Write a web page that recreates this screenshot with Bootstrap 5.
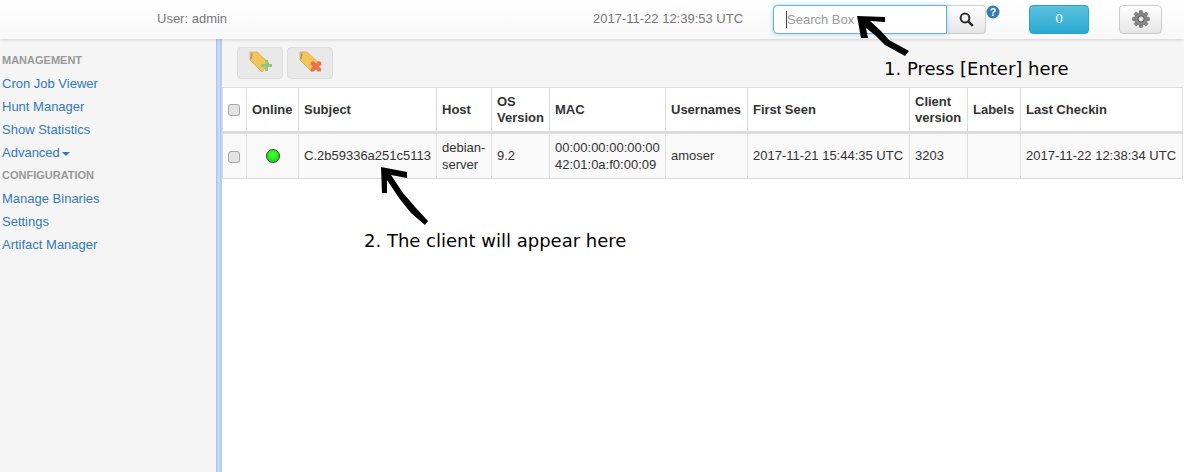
<!DOCTYPE html>
<html lang="en">
<head>
  <meta charset="UTF-8" />
  <title>GRR</title>
  <link href="https://cdn.jsdelivr.net/npm/bootstrap@5.3.3/dist/css/bootstrap.min.css" rel="stylesheet" />
  <style>
    html, body { height: 472px; overflow: hidden; }
    body { font-family: "Liberation Sans", Arial, sans-serif; font-size: 13px; line-height: 1.42; color: #333; background: #fff; }
    .top-bar { height: 39px; background: linear-gradient(#fff, #f8f8f8); box-shadow: 0 1px 3px rgba(0,0,0,.15); position: relative; z-index: 2; color: #777; }
    .user-box { width: 157px; }
    .user-text { width: 436px; }
    .time-text { width: 180px; }
    .search-wrap { width: 174px; height: 29px; margin-top: -1px; }
    .search-input { width: 100%; height: 100%; font-size: 13px; padding: 0 13px; border: 1px solid #66afe9; border-radius: 4px 0 0 4px; box-shadow: 0 0 4px rgba(102,175,233,.5); outline: 0; font-family: inherit; }
    .search-input::placeholder { color: #999; }
    .search-caret { position: absolute; left: 13px; top: 6px; width: 1px; height: 17px; background: #444; }
    .search-btn { width: 39px; height: 29px; padding: 0; margin-top: -1px; border: 1px solid #ccc; border-left: 0; border-radius: 0 4px 4px 0; background: linear-gradient(#fff, #e6e6e6); }
    .help-wrap { width: 43px; height: 29px; }
    .count-btn { width: 60px; height: 29px; padding: 0; font-size: 13px; margin-top: -1px; color: #fff; border: 1px solid #28a4c9; border-radius: 4px; background: linear-gradient(#5bc0de, #2aabd2); }
    .gear-btn { width: 43px; height: 29px; padding: 0; margin-left: 30px; margin-top: -1px; border: 1px solid #ccc; border-radius: 4px; background: linear-gradient(#fff, #e6e6e6); }
    .main-area { height: 433px; }
    .side-nav { width: 216px; background: #f5f5f5; padding: 13px 2px 0; }
    .side-head { font-size: 11px; font-weight: 700; color: #999; line-height: 16px; height: 20px; }
    .side-head-next { line-height: 23px; height: 23px; }
    .side-link { display: block; height: 23px; line-height: 23px; color: #337ab7; text-decoration: none; }
    .side-caret { display: inline-block; margin-left: 2px; vertical-align: middle; border-top: 4px solid #337ab7; border-left: 4px solid transparent; border-right: 4px solid transparent; }
    .split-bar { width: 6px; background: linear-gradient(to right, #a4c2f4, #d3e2fb 50%, #a4c2f4 85%, #e2e2e2); }
    .content-pane { width: 962px; }
    .tool-row { height: 48px; background: #f5f5f5; padding: 8px 15px 0; gap: 4px; }
    .tool-btn { width: 46px; height: 32px; padding: 0; border: 1px solid #ddd; border-radius: 4px; background: #e9e9e9; }
    .client-table { width: 960px; table-layout: fixed; margin: 0; border-color: #ddd; font-size: 13px; --bs-table-color: #333; --bs-table-border-color: #ddd; }
    .client-table th, .client-table td { padding: 4px 5px 6px; line-height: 17px; vertical-align: middle; white-space: normal; }
    .client-table th { height: 45px; padding: 5px; line-height: 16px; border-bottom: 3px solid #ddd; background: #fff; }
    .client-table td { height: 44px; --bs-table-bg: #f9f9f9; background: #f9f9f9; }
    .client-table td.two-line { padding: 5px; }
    .client-table .chk-cell { padding: 0 1px 0 0; text-align: center; }
    .client-table input[type=checkbox] { appearance: none; display: inline-block; width: 12px; height: 12px; margin: 0; vertical-align: middle; border: 1px solid #a5a5a5; border-radius: 3px; background: #e3e3e3; }
    .c1 { width: 24px; } .c2 { width: 52px; } .c3 { width: 138px; } .c4 { width: 55px; } .c5 { width: 58px; }
    .c6 { width: 116px; } .c7 { width: 82px; } .c8 { width: 162px; } .c9 { width: 58px; } .c10 { width: 53px; } .c11 { width: 162px; }
    .online-dot { display: block; margin: 1px auto 0; width: 14px; height: 14px; border-radius: 50%; border: 1px solid #2a4a2a; background: radial-gradient(circle at 50% 40%, #4dff3a, #12e012 75%); }
    .note-label { position: absolute; font-family: "DejaVu Sans", sans-serif; font-size: 18px; line-height: 20px; color: #000; white-space: nowrap; z-index: 5; }
    .note-one { left: 884px; top: 59px; }
    .note-two { left: 364px; top: 231px; }
    .arrow-layer { position: absolute; left: 0; top: 0; z-index: 5; pointer-events: none; }
  </style>
</head>
<body>
  <div class="top-bar d-flex align-items-center">
    <div class="user-box"></div>
    <div class="user-text">User: admin</div>
    <div class="time-text">2017-11-22 12:39:53 UTC</div>
    <div class="search-wrap position-relative">
      <input class="search-input d-block" type="text" placeholder="Search Box" />
      <span class="search-caret"></span>
    </div>
    <button class="search-btn" type="button">
      <svg width="15" height="15" viewBox="0 0 15 15"><circle cx="6" cy="6" r="4.400" fill="none" stroke="#2a2a2a" stroke-width="2"/><path d="M9.300 9.300 13.800 13.800" stroke="#2a2a2a" stroke-width="2.600"/></svg>
    </button>
    <div class="help-wrap">
      <svg class="d-block" width="14" height="14" viewBox="0 0 14 14"><circle cx="7" cy="7" r="6.500" fill="#337ab7"/><text x="7" y="10.600" text-anchor="middle" font-family="Liberation Sans" font-size="10.500" font-weight="700" fill="#fff">?</text></svg>
    </div>
    <button class="count-btn" type="button">0</button>
    <button class="gear-btn" type="button">
      <svg width="18" height="18" viewBox="0 0 18 18"><g fill="#8c8c8c" stroke="#5a5a5a" stroke-width=".5"><rect x="7.300" y="0.500" width="3.400" height="17" rx=".8"/><rect x="7.300" y="0.500" width="3.400" height="17" rx=".8" transform="rotate(45 9 9)"/><rect x="7.300" y="0.500" width="3.400" height="17" rx=".8" transform="rotate(90 9 9)"/><rect x="7.300" y="0.500" width="3.400" height="17" rx=".8" transform="rotate(135 9 9)"/><circle cx="9" cy="9" r="6.200"/></g><circle cx="9" cy="9" r="3.200" fill="#e6e6e6" stroke="#444"/></svg>
    </button>
  </div>

  <div class="main-area d-flex">
    <nav class="side-nav">
      <div class="side-head">MANAGEMENT</div>
      <a class="side-link" href="#">Cron Job Viewer</a>
      <a class="side-link" href="#">Hunt Manager</a>
      <a class="side-link" href="#">Show Statistics</a>
      <a class="side-link" href="#">Advanced<span class="side-caret"></span></a>
      <div class="side-head side-head-next">CONFIGURATION</div>
      <a class="side-link" href="#">Manage Binaries</a>
      <a class="side-link" href="#">Settings</a>
      <a class="side-link" href="#">Artifact Manager</a>
    </nav>
    <div class="split-bar"></div>
    <div class="content-pane">
      <div class="tool-row d-flex">
        <button class="tool-btn" type="button">
          <svg width="28" height="28" viewBox="0 0 28 28"><path d="M4 3h7l12 11-7 9L4 11z" fill="#f4c65a" stroke="#dca93a" stroke-width=".8"/><path d="M6 4.500 5 10" stroke="#999" stroke-width="1.500"/><path d="M15 15h4v-4h3v4h4v3h-4v4h-3v-4h-4z" fill="#8fc97a"/></svg>
        </button>
        <button class="tool-btn" type="button">
          <svg width="28" height="28" viewBox="0 0 28 28"><path d="M4 3h7l12 11-7 9L4 11z" fill="#f4c65a" stroke="#dca93a" stroke-width=".8"/><path d="M6 4.500 5 10" stroke="#999" stroke-width="1.500"/><path d="M15 13l2.500-1 2.500 2.500 2.500-2.500 2.500 1 .5 2.500-2.500 2 2.500 2.500-1 2.500-2.500 0-2-2-2.500 2-2.500-.5-.5-2.500 2.500-2-2.500-2z" fill="#e8734a"/></svg>
        </button>
      </div>
      <table class="table table-bordered client-table">
        <colgroup>
          <col class="c1"><col class="c2"><col class="c3"><col class="c4"><col class="c5"><col class="c6"><col class="c7"><col class="c8"><col class="c9"><col class="c10"><col class="c11">
        </colgroup>
        <thead>
          <tr>
            <th class="chk-cell"><input type="checkbox" /></th>
            <th>Online</th><th>Subject</th><th>Host</th><th>OS Version</th><th>MAC</th><th>Usernames</th><th>First Seen</th><th>Client version</th><th>Labels</th><th>Last Checkin</th>
          </tr>
        </thead>
        <tbody>
          <tr>
            <td class="chk-cell"><input type="checkbox" /></td>
            <td><span class="online-dot"></span></td>
            <td>C.2b59336a251c5113</td>
            <td class="two-line">debian-server</td>
            <td>9.2</td>
            <td class="two-line">00:00:00:00:00:00<br>42:01:0a:f0:00:09</td>
            <td>amoser</td>
            <td>2017-11-21 15:44:35 UTC</td>
            <td>3203</td>
            <td></td>
            <td>2017-11-22 12:38:34 UTC</td>
          </tr>
        </tbody>
      </table>
    </div>
  </div>

  <svg class="arrow-layer" width="1184" height="472" viewBox="0 0 1184 472" fill="#000">
    <path d="M857 16 885 17V22L870 21 881 31 889 40 909 51 905 56 885 45 875 35 866 28 868 38H861Z"/>
    <path d="M381 167 407 172V178L391 175 403 193 416 208 428 221 425 225 411 213 399 198 387 180V193H382Z"/>
  </svg>
  <div class="note-label note-one">1. Press [Enter] here</div>
  <div class="note-label note-two">2. The client will appear here</div>
</body>
</html>
